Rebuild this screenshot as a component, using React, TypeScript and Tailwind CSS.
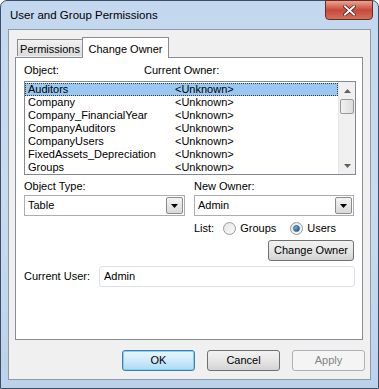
const rows = [
  "Auditors",
  "Company",
  "Company_FinancialYear",
  "CompanyAuditors",
  "CompanyUsers",
  "FixedAssets_Depreciation",
  "Groups",
];

const ComboBox = ({ value }: { value: string }) => {
  return (
    <div className="flex h-[21px] w-full items-center justify-between border border-[#abadb3] bg-white">
      <span className="pl-[3px]">{value}</span>
      <div className="mr-[1px] flex h-[17px] w-[17px] items-center justify-center rounded-[2px] border border-[#8c8c8c] bg-gradient-to-b from-[#f4f4f4] to-[#d9d9d9]">
        <svg width="7" height="4" viewBox="0 0 7 4">
          <path d="M0 0h7L3.5 4z" fill="#000" />
        </svg>
      </div>
    </div>
  );
};

const Radio = ({ checked, label }: { checked?: boolean; label: string }) => {
  return (
    <div className="flex items-center gap-[4px]">
      <div className="flex h-[13px] w-[13px] items-center justify-center rounded-full border border-[#9a9a9a] bg-gradient-to-br from-[#e6e6e6] to-[#f8f8f8]">
        {checked && (
          <div className="h-[7px] w-[7px] rounded-full border border-[#2c628b] bg-gradient-to-br from-[#86c6ee] to-[#0d4f90]" />
        )}
      </div>
      <span>{label}</span>
    </div>
  );
};

const Button = ({
  label,
  variant,
  className,
}: {
  label: string;
  variant?: "default" | "disabled";
  className?: string;
}) => {
  let look =
    "border-[#707070] bg-gradient-to-b from-[#f2f2f2] via-[#e6e6e6] to-[#d3d3d3] text-black";
  if (variant === "default")
    look =
      "border-[#3c7fb1] bg-gradient-to-b from-[#eaf6fd] via-[#cfeaf9] to-[#a9dbf6] text-black shadow-[inset_0_0_0_1px_#7fd0f7]";
  if (variant === "disabled") look = "border-[#adb2b5] bg-[#f4f4f4] text-[#838383]";
  return (
    <div
      className={`flex h-[21px] items-center justify-center rounded-[3px] border ${look} ${className ?? ""}`}
    >
      {label}
    </div>
  );
};

export default function App() {
  return (
    <div
      className="flex h-[389px] w-[379px] flex-col rounded-t-[7px] border border-[#3d4f66] bg-gradient-to-b from-[#c3d7ee] via-[#c9dbef] to-[#bcd2ea] text-[11px] text-black"
      style={{ fontFamily: '"Liberation Sans", Arial, sans-serif' }}
    >
      {/* title bar */}
      <div className="relative flex h-[28px] shrink-0 items-center pl-[9px] pt-[2px]">
        <span className="text-[11.5px] text-[#000]">User and Group Permissions</span>
        <div className="absolute right-[5px] top-[-1px] flex h-[20px] w-[48px] items-center justify-center rounded-b-[4px] border border-[#6b2a21] bg-gradient-to-b from-[#e8a393] via-[#c9483a] to-[#d2705a]">
          <svg width="13" height="11" viewBox="0 0 13 11">
            <path
              d="M2 1.5l9 8M11 1.5l-9 8"
              stroke="#3b1410"
              strokeWidth="3.4"
              strokeLinecap="square"
            />
            <path
              d="M2 1.5l9 8M11 1.5l-9 8"
              stroke="#fff"
              strokeWidth="2"
              strokeLinecap="square"
            />
          </svg>
        </div>
      </div>

      {/* client area */}
      <div className="mx-[7px] flex h-[351px] flex-col border border-[#8d9aa8] bg-[#f0f0f0] pl-[6px] pt-[7px]">
        {/* tabs */}
        <div className="relative z-10 flex h-[20px] items-end pl-[2px]">
          <div className="mb-[1px] flex h-[17px] w-[66px] items-center justify-center border border-b-0 border-[#898c95] bg-gradient-to-b from-[#f2f2f2] to-[#dcdcdc] pt-[2px]">
            Permissions
          </div>
          <div className="-mb-[1px] -ml-[1px] flex h-[21px] w-[87px] items-start justify-center border border-b-0 border-[#898c95] bg-white pt-[3px]">
            Change Owner
          </div>
        </div>

        {/* panel */}
        <div className="flex h-[283px] w-[348px] flex-col border border-[#898c95] bg-white pl-[8px] pt-[6px]">
          <div className="flex h-[13px] items-center leading-[13px]">
            <span className="w-[120px]">Object:</span>
            <span>Current Owner:</span>
          </div>

          {/* listbox */}
          <div className="mt-[4px] flex h-[94px] w-[332px] border border-[#828790] bg-white">
            <div className="flex flex-1 flex-col pt-[1px]">
              {rows.map((r, i) => (
                <div
                  key={r}
                  className={`flex h-[13px] items-center leading-[13px] ${
                    i === 0
                      ? "border border-dotted border-[#3a3a3a] bg-[#99c9f3]"
                      : "border border-transparent"
                  }`}
                >
                  <span className="w-[149px] pl-[2px]">{r}</span>
                  <span>&lt;Unknown&gt;</span>
                </div>
              ))}
            </div>
            <div className="flex w-[17px] flex-col border-l border-[#e6e6e6] bg-[#f0f0f0]">
              <div className="flex h-[17px] items-center justify-center">
                <svg width="7" height="4" viewBox="0 0 7 4">
                  <path d="M0 4h7L3.5 0z" fill="#606060" />
                </svg>
              </div>
              <div className="mx-[1px] h-[15px] rounded-[2px] border border-[#979797] bg-gradient-to-r from-[#f2f2f2] to-[#dcdcdc]" />
              <div className="flex-1" />
              <div className="flex h-[17px] items-center justify-center">
                <svg width="7" height="4" viewBox="0 0 7 4">
                  <path d="M0 0h7L3.5 4z" fill="#606060" />
                </svg>
              </div>
            </div>
          </div>

          <div className="mt-[5px] flex gap-[9px]">
            <div className="flex w-[161px] flex-col gap-[2px]">
              <span className="h-[13px] leading-[13px]">Object Type:</span>
              <ComboBox value="Table" />
            </div>
            <div className="flex w-[160px] flex-col">
              <span className="h-[13px] leading-[13px]">New Owner:</span>
              <div className="mt-[2px]">
                <ComboBox value="Admin" />
              </div>
              <div className="mt-[5px] flex h-[15px] items-center gap-[9px]">
                <span>List:</span>
                <Radio label="Groups" />
                <div className="ml-[5px]">
                  <Radio checked label="Users" />
                </div>
              </div>
              <div className="mt-[4px] flex justify-end">
                <Button label="Change Owner" className="w-[86px]" />
              </div>
            </div>
          </div>

          <div className="mt-[5px] flex items-center">
            <span className="w-[75px]">Current User:</span>
            <div className="flex h-[21px] w-[256px] items-center rounded-[3px] border border-[#dbdfe6] bg-white pl-[4px]">
              Admin
            </div>
          </div>
        </div>

        {/* buttons */}
        <div className="mt-[10px] flex gap-[12px] pl-[107px]">
          <Button label="OK" variant="default" className="w-[73px]" />
          <Button label="Cancel" className="w-[73px]" />
          <Button label="Apply" variant="disabled" className="w-[73px]" />
        </div>
      </div>
    </div>
  );
}
